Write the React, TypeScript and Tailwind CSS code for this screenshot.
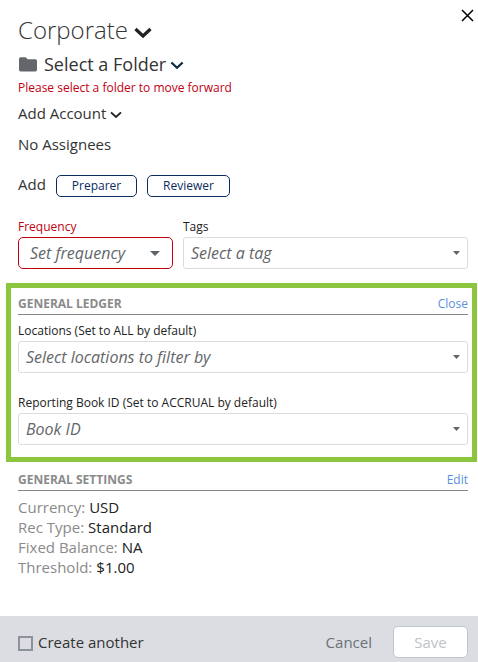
import type { ReactNode } from 'react';

// ============================================
// Icons
// ============================================

interface ChevronProps {
    className: string;
    strokeWidth?: number;
}

function Chevron({ className, strokeWidth = 2.6 }: ChevronProps) {
    return (
        <svg viewBox="0 0 18 12" fill="none" className={className}>
            <path d="M1.5 2 L9 9 L16.5 2" stroke="currentColor" strokeWidth={strokeWidth} />
        </svg>
    );
}

function FolderIcon() {
    return (
        <svg viewBox="0 0 18 15" className="ml-px w-[18px] h-[15px] shrink-0 text-[#63666a]">
            <path
                d="M1.6 0.3 H6.8 L8.6 2.2 H16.4 Q18 2.2 18 3.8 V12.8 Q18 14.4 16.4 14.4 H1.6 Q0 14.4 0 12.8 V1.9 Q0 0.3 1.6 0.3 Z"
                fill="currentColor"
            />
        </svg>
    );
}

// ============================================
// Form Pieces
// ============================================

interface SelectFieldProps {
    placeholder: string;
}

function SelectField({ placeholder }: SelectFieldProps) {
    return (
        <button className="flex h-8 w-full items-center justify-between rounded-[3px] border border-[#dcdcdc] bg-white pl-[7px] pr-[7px] text-[16px] italic text-[#63666a]">
            <span>{placeholder}</span>
            <svg viewBox="0 0 7 4" className="mb-px h-1 w-[7px]">
                <path d="M0 0 H7 L3.5 4 Z" fill="#5c6468" />
            </svg>
        </button>
    );
}

interface SectionHeaderProps {
    title: string;
    action: string;
}

function SectionHeader({ title, action }: SectionHeaderProps) {
    return (
        <div className="flex h-[22px] items-center justify-between border-b border-[#868686] text-[12px]">
            <h2 className="font-bold text-[#8a8a8a]">{title}</h2>
            <button className="pt-px text-[12px] text-[#5890dc]">{action}</button>
        </div>
    );
}

function RoleButton({ className, children }: { className: string; children: ReactNode }) {
    return (
        <button
            className={`h-[22px] rounded-[5px] border border-[#0b2c5f] text-[12px] leading-5 text-[#0b2c5f] ${className}`}
        >
            {children}
        </button>
    );
}

const settings = [
    { label: 'Currency', value: 'USD' },
    { label: 'Rec Type', value: 'Standard' },
    { label: 'Fixed Balance', value: 'NA' },
    { label: 'Threshold', value: '$1.00' },
];

// ============================================
// Panel
// ============================================

export default function App() {
    return (
        <div className="relative flex h-[662px] w-[478px] flex-col overflow-hidden bg-white font-['Open_Sans',sans-serif] text-[15px] text-[#333]">
            <button aria-label="Close panel" className="absolute left-[461px] top-[9px] text-black">
                <svg viewBox="0 0 13 13" className="size-[13px]">
                    <path d="M1 1 L12 12 M12 1 L1 12" stroke="currentColor" strokeWidth="1.5" />
                </svg>
            </button>

            <header className="px-[18px] pt-[15px]">
                <h1 className="flex h-[30px] items-center text-[24px] font-light text-[#333]">
                    Corporate
                    <Chevron className="ml-1.5 mt-[5px] h-3 w-[18px] text-[#222]" strokeWidth={3.2} />
                </h1>
                <div className="mt-[7px] flex h-6 items-center text-[18px] text-[#333]">
                    <FolderIcon />
                    <span className="ml-[7px]">Select a Folder</span>
                    <Chevron className="ml-1 mt-[3px] h-[9px] w-[14px] text-[#0b2c45]" strokeWidth={3} />
                </div>
                <p className="mt-1 h-4 text-[12px] leading-4 text-[#c20010]">
                    Please select a folder to move forward
                </p>
                <div className="mt-[7px] flex h-5 items-center">
                    Add Account
                    <Chevron className="ml-1 mt-[3px] h-2 w-[12px] text-[#222]" strokeWidth={2.8} />
                </div>
                <p className="mt-[11px] h-5 leading-5">No Assignees</p>
                <div className="mt-[21px] flex h-[22px] items-center">
                    <span className="w-[38px] pb-1">Add</span>
                    <RoleButton className="w-[81px]">Preparer</RoleButton>
                    <RoleButton className="ml-2.5 w-[83px]">Reviewer</RoleButton>
                </div>
            </header>

            <div className="mt-[22px] flex gap-2.5 pl-[18px] pr-2.5">
                <div className="w-[155px]">
                    <p className="h-[18px] text-[12px] leading-4 text-[#c20010]">Frequency</p>
                    <button className="flex h-8 w-full items-center justify-between rounded-[5px] border border-[#c20010] pl-[11px] pr-3 text-[16px] italic text-[#63666a]">
                        <span>Set frequency</span>
                        <svg viewBox="0 0 10 5" className="h-[5px] w-2.5">
                            <path d="M0 0 H10 L5 5 Z" fill="#5c6468" />
                        </svg>
                    </button>
                </div>
                <div className="w-[285px]">
                    <p className="h-[18px] text-[12px] leading-4 text-[#222]">Tags</p>
                    <SelectField placeholder="Select a tag" />
                </div>
            </div>

            {/* General ledger, highlighted */}
            <section className="ml-1.5 mt-3.5 h-[179px] w-[471px] border-[5px] border-[#8cc63f] pl-[7px] pr-1 pt-[5px]">
                <SectionHeader title="GENERAL LEDGER" action="Close" />
                <p className="mt-2 h-[18px] text-[12px] leading-4 text-[#222]">
                    Locations (Set to ALL by default)
                </p>
                <SelectField placeholder="Select locations to filter by" />
                <p className="mt-[22px] h-[18px] text-[12px] leading-4 text-[#222]">
                    Reporting Book ID (Set to ACCRUAL by default)
                </p>
                <SelectField placeholder="Book ID" />
            </section>

            <section className="mt-[7px] pl-[18px] pr-2.5">
                <SectionHeader title="GENERAL SETTINGS" action="Edit" />
                <dl className="mt-1.5">
                    {settings.map(({ label, value }) => (
                        <div key={label} className="flex h-5 gap-1 leading-5">
                            <dt className="text-[#8a8a8a]">{label}:</dt>
                            <dd className="text-[#222]">{value}</dd>
                        </div>
                    ))}
                </dl>
            </section>

            <footer className="mt-auto flex h-[46px] items-center bg-[#dcdde2] pl-[18px] pr-2.5 pt-1.5">
                <label className="flex items-center gap-[5px]">
                    <span className="mt-[3px] size-[15px] border-2 border-[#8b9298]" />
                    <span>Create another</span>
                </label>
                <button className="ml-auto text-[#687278]">Cancel</button>
                <button className="ml-[21px] h-8 w-[75px] rounded-[5px] border border-[#bcc6ce] bg-white text-[#bcc4ca]">
                    Save
                </button>
            </footer>
        </div>
    );
}
